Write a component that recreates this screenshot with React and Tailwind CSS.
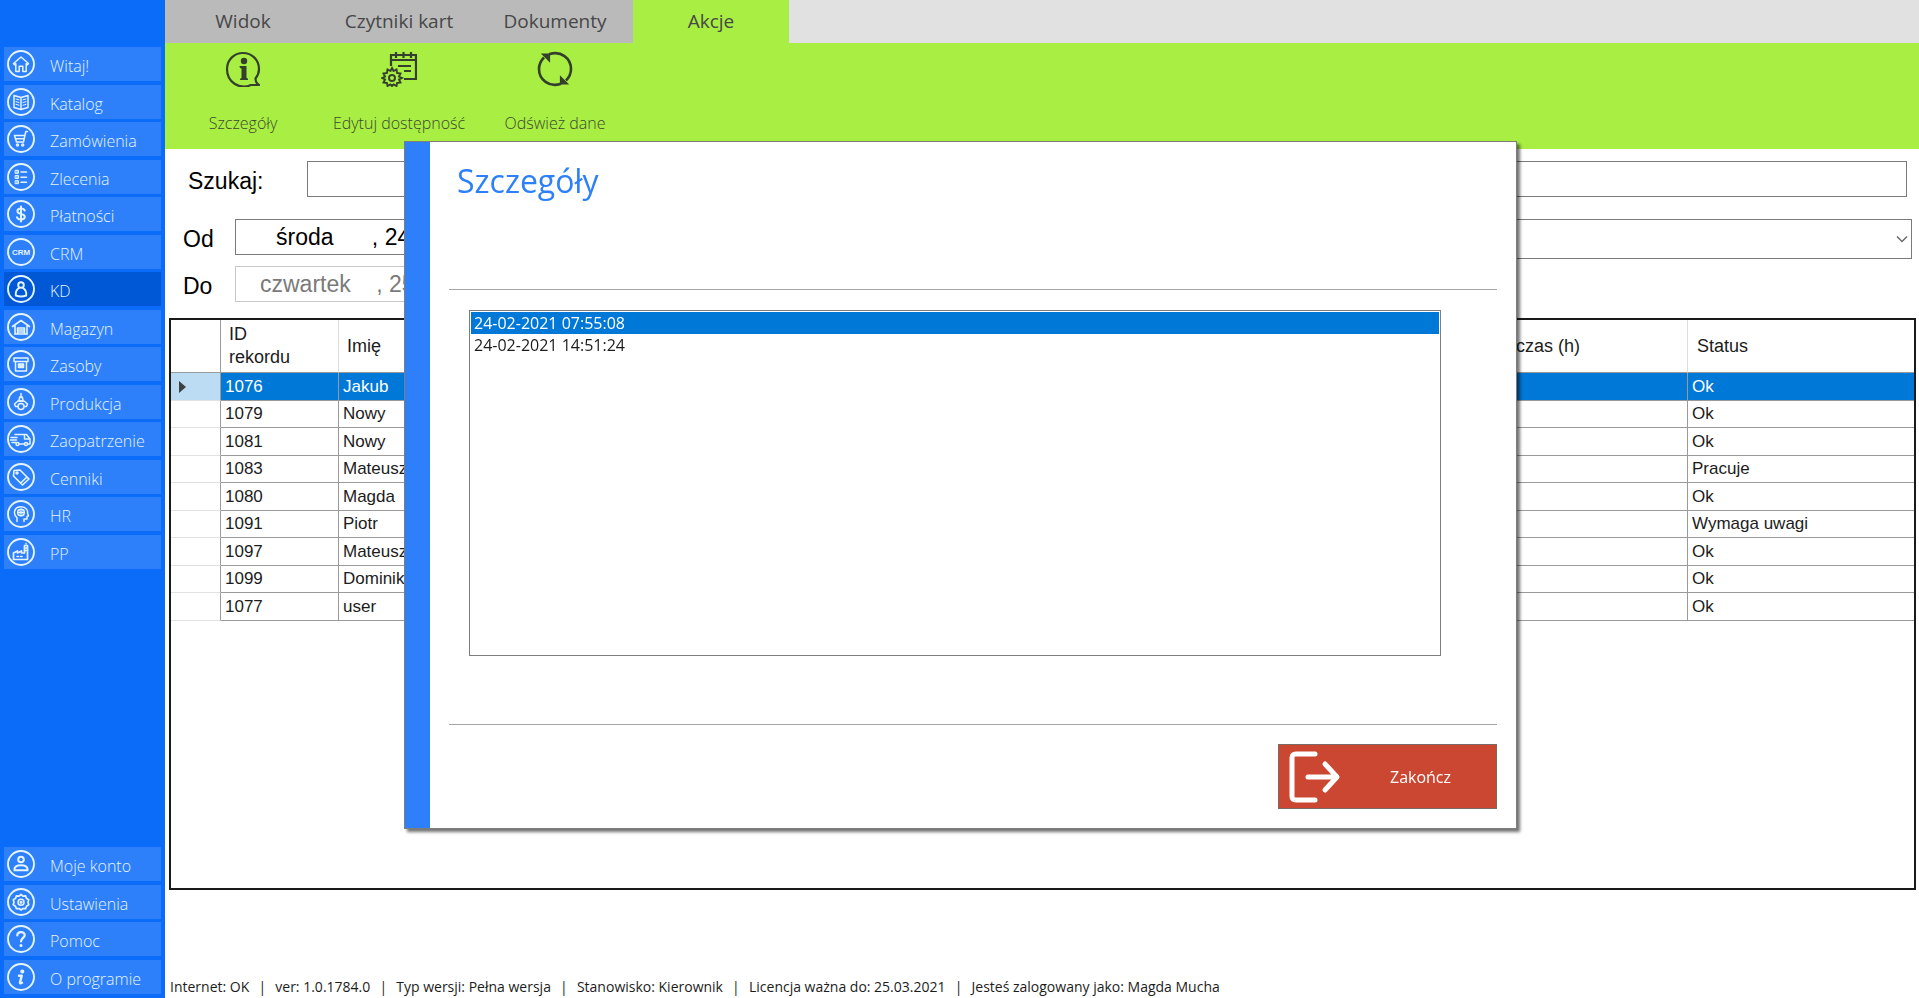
// src/App.jsx
import React from 'react';

const CircleIcon = ({ children }) => (
  <svg
    className="w-7 h-7 shrink-0"
    viewBox="0 0 28 28"
    fill="none"
    stroke="currentColor"
    strokeWidth="1.5"
    strokeLinecap="round"
    strokeLinejoin="round"
    aria-hidden="true"
  >
    <circle cx="14" cy="14" r="13" strokeWidth="1.9" />
    {children}
  </svg>
);

const icons = {
  home: <path d="M6.5 13.5 14 7l7.5 6.5-1 1.2-1.3-1v7.8h-3.4v-5.3h-3.6v5.3H8.8v-7.8l-1.3 1z" />,
  book: (
    <>
      <path d="M14 9.5 7 7.5v12l7 2 7-2v-12zM14 9.500v12" />
      <path d="m9 11 3 .8M9 13.7l3 .8M9 16.4l3 .8M19 11l-3 .8M19 13.7l-3 .8M19 16.4l-3 .8" strokeWidth="1" />
    </>
  ),
  cart: (
    <>
      <path d="M20.5 6.5h-1.7L16.500 17H9.500l-2-6.500h10M9 13.700h8" />
      <circle cx="10.500" cy="20" r="1" />
      <circle cx="15.700" cy="20" r="1" />
    </>
  ),
  list: (
    <>
      <path d="M8.5 7.300h3v3h-3zM8.500 12.500h3v3h-3zM8.500 17.700h3v3h-3z" fill="currentColor" fillOpacity=".6" strokeWidth="1" />
      <path d="M14 9h5.500M14 14.200h5.500M14 19.300h5.500" />
    </>
  ),
  dollar: <path d="M17.7 10.500c-.6-1.400-2-1.900-3.700-1.900-2 0-3.600.9-3.600 2.600 0 3.700 7.400 1.900 7.400 5.600 0 1.800-1.700 2.700-3.800 2.700s-3.500-.7-4-2.300M14 6.500v15" strokeWidth="2" />,
  crm: (
    <text x="14" y="17" textAnchor="middle" fontSize="8" fontWeight="700" fontFamily="Liberation Sans, sans-serif" fill="currentColor" stroke="none">
      CRM
    </text>
  ),
  person: (
    <>
      <circle cx="14" cy="10" r="2.800" strokeWidth="1.900" />
      <path d="M12 13c-3 2-3.600 4.500-3.200 7.500 3 1.200 7.400 1.200 10.400 0 .4-3-.2-5.500-3.200-7.500" strokeWidth="1.900" />
    </>
  ),
  warehouse: (
    <>
      <path d="M5.500 13.500 14 7.500l8.500 6M8 13v8M20 13v8" strokeWidth="1.600" />
      <path d="M10.500 21v-6h7v6M10.500 17h7M10.500 19h7M8 21h12" />
    </>
  ),
  box: <path d="M7 8h14v3.500H7zM8.500 11.500V21h11v-9.500M11.500 14h5v3.500h-5zM13 14v2h2v-2" />,
  production: (
    <>
      <path d="M14 5.500v4M12.700 9h2.600l.8 4h-4.200z" />
      <path d="M11 13h6l3.500 3-1 2.500h-2M11 13l-3.500 3 1 2.500h2" />
      <circle cx="14" cy="18.500" r="3" />
    </>
  ),
  truck: (
    <>
      <path d="M8 9.500h11.500L23 14v5h-2M12.500 19H17M17.500 9.500V14H23M4 12.500h6M3.500 15h6M5 17.500h4" />
      <circle cx="10.500" cy="19" r="1.500" />
      <circle cx="19" cy="19" r="1.500" />
    </>
  ),
  tag: (
    <>
      <path d="M7 7.500 13 7l9 9-6.500 6-9-9zM20 14l-6.300 6" strokeWidth="1.600" />
      <circle cx="10" cy="10" r="1" />
    </>
  ),
  head: (
    <>
      <path d="M10 21.500v-3.700c-4-3.500-3.500-11 4-11 5.500 0 7 4 6.500 6.500l1 2.500-1.500.7V19h-3v2.500" />
      <circle cx="14" cy="12.500" r="3.300" />
      <path d="M14 9v7M10.500 12.500h7M11.500 10l5 5M16.500 10l-5 5" strokeWidth="1" />
    </>
  ),
  factory: (
    <>
      <path d="M6.500 21.500V15l4-2v2l4-2v2h3V7.500h3v14z" strokeWidth="1.700" />
      <path d="M10 18.500h1.500M13.500 18.500H15M19 6v-.5M17.500 10h3M17.500 12.500h3" />
    </>
  ),
  user: (
    <>
      <circle cx="14" cy="9.500" r="2.800" strokeWidth="2" />
      <path d="M7.500 20.300c-.5-4 2.500-5 6.500-5s7 1 6.500 5z" strokeWidth="2" />
    </>
  ),
  gear: (
    <>
      <path d="m14 6.500 2 1.600 2.600-.2.900 2.500 2.200 1.400-.7 2.500.7 2.500-2.200 1.400-.9 2.500-2.600-.2-2 1.500-2-1.500-2.600.2-.9-2.500-2.200-1.400.7-2.500-.7-2.500 2.200-1.400.9-2.500 2.600.2z" strokeWidth="1.700" />
      <circle cx="14" cy="14.200" r="3" />
      <circle cx="14" cy="14.200" r=".8" />
    </>
  ),
  help: (
    <>
      <path d="M10.300 10.500c0-4.500 7.600-4.500 7.400-.3-.1 2.600-3.700 3-3.700 6.300" strokeWidth="2.200" />
      <circle cx="14" cy="20.500" r=".8" fill="currentColor" />
    </>
  ),
  info: (
    <>
      <circle cx="15.300" cy="8.500" r="1.300" fill="currentColor" />
      <path d="M12 12.700h2.700L13 19.500c-.2 1 .8 1 2 .2" strokeWidth="2.400" />
    </>
  ),
};

const mainMenu = [
  { label: 'Witaj!', icon: 'home' },
  { label: 'Katalog', icon: 'book' },
  { label: 'Zamówienia', icon: 'cart' },
  { label: 'Zlecenia', icon: 'list' },
  { label: 'Płatności', icon: 'dollar' },
  { label: 'CRM', icon: 'crm' },
  { label: 'KD', icon: 'person', active: true },
  { label: 'Magazyn', icon: 'warehouse' },
  { label: 'Zasoby', icon: 'box' },
  { label: 'Produkcja', icon: 'production' },
  { label: 'Zaopatrzenie', icon: 'truck' },
  { label: 'Cenniki', icon: 'tag' },
  { label: 'HR', icon: 'head' },
  { label: 'PP', icon: 'factory' },
];

const bottomMenu = [
  { label: 'Moje konto', icon: 'user' },
  { label: 'Ustawienia', icon: 'gear' },
  { label: 'Pomoc', icon: 'help' },
  { label: 'O programie', icon: 'info' },
];

const tabs = ['Widok', 'Czytniki kart', 'Dokumenty', 'Akcje'];

const rows = [
  { id: 1076, name: 'Jakub', status: 'Ok', selected: true },
  { id: 1079, name: 'Nowy', status: 'Ok' },
  { id: 1081, name: 'Nowy', status: 'Ok' },
  { id: 1083, name: 'Mateusz', status: 'Pracuje' },
  { id: 1080, name: 'Magda', status: 'Ok' },
  { id: 1091, name: 'Piotr', status: 'Wymaga uwagi' },
  { id: 1097, name: 'Mateusz', status: 'Ok' },
  { id: 1099, name: 'Dominik', status: 'Ok' },
  { id: 1077, name: 'user', status: 'Ok' },
];

const statusItems = [
  'Internet: OK',
  'ver: 1.0.1784.0',
  'Typ wersji: Pełna wersja',
  'Stanowisko: Kierownik',
  'Licencja ważna do: 25.03.2021',
  'Jesteś zalogowany jako: Magda Mucha',
];

function MenuButton({ item }) {
  return (
    <button
      type="button"
      className={`flex items-center w-full h-[34px] gap-[15px] pl-[3px] text-base font-light text-[#e4f4ff] ${
        item.active ? 'bg-[#0058d6]' : 'bg-[#2e80fa]'
      }`}
    >
      <CircleIcon>{icons[item.icon]}</CircleIcon>
      <span className="pt-1 whitespace-nowrap">{item.label}</span>
    </button>
  );
}

function Sidebar() {
  return (
    <aside className="flex flex-col justify-between w-[165px] shrink-0 pl-1 pr-1 pt-[47px] pb-1 bg-[#0a6cf8]">
      <nav className="flex flex-col justify-between h-[522px]">
        {mainMenu.map((item) => (
          <MenuButton key={item.label} item={item} />
        ))}
      </nav>
      <nav className="flex flex-col justify-between h-[147px]">
        {bottomMenu.map((item) => (
          <MenuButton key={item.label} item={item} />
        ))}
      </nav>
    </aside>
  );
}

function RibbonButton({ label, children }) {
  return (
    <button type="button" className="flex flex-col items-center w-[156px] pt-2 text-[#3c4a2c]">
      <svg className="w-9 h-9" viewBox="0 0 36 36" fill="none" stroke="#34402c" strokeWidth="2.2" aria-hidden="true">
        {children}
      </svg>
      <span className="mt-6 text-base font-light leading-6 whitespace-nowrap">{label}</span>
    </button>
  );
}

function Ribbon() {
  return (
    <header>
      <div className="flex h-[43px] bg-[#e1e1e1]">
        {tabs.map((tab) => (
          <button
            key={tab}
            type="button"
            className={`w-[156px] text-[19px] text-[#474747] ${tab === 'Akcje' ? 'bg-[#a9ee43]' : 'bg-[#bababa]'}`}
          >
            {tab}
          </button>
        ))}
      </div>
      <div className="flex items-start h-[106px] bg-[#a9ee43]">
        <RibbonButton label="Szczegóły">
          <path d="M34 34h-8c-12 5-24-3-24-16C2 9 9 2 18 2s16 7 16 16c0 4-1.500 7-3.500 9.500 0 3 1 5 3.500 6.500z" strokeLinejoin="round" />
          <circle cx="19" cy="10" r="3.200" fill="#34402c" stroke="none" />
          <path d="M14.500 15h7v12c1 0 1.500.5 1.500 2h-8c0-1.200.5-2 1.500-2v-9.500c-1.500 0-2-1-2-2.500z" fill="#34402c" stroke="none" />
        </RibbonButton>
        <RibbonButton label="Edytuj dostępność">
          <path d="M10 15V4h25v24H23M10 9h25M15 1v6M22.500 1v6M30 1v6M17 15h13M23 20h7" />
          <path d="m11 17 1.500 3 3-1.500.5 3.500 3.500.5-1.500 3 3 1.500-3 1.500 1.500 3-3.500.5-.5 3-3-1.500-1.500 1.500-1.500-1.500-3 1.500-.5-3-3.500-.5 1.500-3-3-1.500 3-1.500-1.500-3 3.500-.5.500-3.500 3 1.500z" strokeWidth="1.900" />
          <circle cx="11" cy="27" r="3" strokeWidth="1.900" />
        </RibbonButton>
        <RibbonButton label="Odśwież dane">
          <path d="M12 3.300C24-1 34 7.500 34 18c0 5-2 8.500-5 11.500M24 32.700C12 37 2 28.500 2 18 2 13 4 9.500 7 6.500" strokeWidth="2.600" />
          <path d="M6.500 3.500h5.500v5.500zM29.500 32.500H24V27z" fill="#34402c" />
        </RibbonButton>
      </div>
    </header>
  );
}

function Filters() {
  return (
    <form className="pt-3 text-[23px] text-black font-['Liberation_Sans',sans-serif]">
      <div className="flex items-start pl-[23px] pr-3">
        <label htmlFor="search" className="w-[119px] pt-1 leading-8">Szukaj:</label>
        <input id="search" type="text" className="flex-1 px-2 border h-9 border-[#7a7a7a]" />
      </div>
      <div className="flex items-start pl-[18px] pr-[7px] mt-[22px]">
        <label htmlFor="from" className="w-[52px] pt-1 leading-8">Od</label>
        <input
          id="from"
          type="text"
          defaultValue="środa      , 24"
          className="w-[280px] pl-10 border h-9 border-[#7a7a7a]"
        />
        <select aria-label="Filtr" className="w-1/2 h-10 px-2 ml-auto appearance-none border border-[#7a7a7a]">
          <option></option>
        </select>
        <svg className="self-center w-3 h-3 mr-1 -ml-4 pointer-events-none" viewBox="0 0 12 12" fill="none" stroke="#6b6b6b" strokeWidth="1.5" aria-hidden="true">
          <path d="m1 3.500 5 5 5-5" />
        </svg>
      </div>
      <div className="flex items-start pl-[18px] mt-[7px]">
        <label htmlFor="to" className="w-[52px] pt-1 leading-8">Do</label>
        <input
          id="to"
          type="text"
          disabled
          defaultValue="czwartek    , 25"
          className="w-[280px] pl-6 border h-9 border-[#c8c8c8] text-[#7a7a7a]"
        />
      </div>
    </form>
  );
}

function Records() {
  return (
    <div className="flex-1 mt-4 ml-1 mr-[3px] border-2 border-[#1a1a1a] font-['Liberation_Sans',sans-serif]">
      <table className="w-full table-fixed border-separate border-spacing-0 text-[17px] text-[#1c1c1c]">
        <colgroup>
          <col className="w-[50px]" />
          <col className="w-[118px]" />
          <col />
          <col className="w-[180px]" />
          <col className="w-[226px]" />
        </colgroup>
        <thead>
          <tr className="h-[53px] text-lg leading-[23px] text-left">
            <th className="border-b border-r border-[#9a9a9a]" aria-label="Wiersz"></th>
            <th className="pl-2 pr-10 font-normal border-b border-r border-b-[#9a9a9a] border-r-[#dcdcdc]">ID rekordu</th>
            <th className="pl-2 font-normal border-b border-b-[#9a9a9a]">Imię</th>
            <th className="pl-2 font-normal border-b border-r border-b-[#9a9a9a] border-r-[#dcdcdc]">czas (h)</th>
            <th className="pl-[9px] font-normal border-b border-b-[#9a9a9a]">Status</th>
          </tr>
        </thead>
        <tbody>
          {rows.map((row) => (
            <tr
              key={row.id}
              className={`odd:h-7 even:h-[27px] leading-5 ${row.selected ? 'bg-[#0078d7] text-white' : ''}`}
            >
              <td className={`border-b border-r border-b-[#e2e2e2] border-r-[#9a9a9a] ${row.selected ? 'bg-[#bcdcf4]' : ''}`}>
                {row.selected && (
                  <svg className="w-2 h-3 ml-2" viewBox="0 0 8 12" fill="#404040" aria-hidden="true">
                    <path d="M0 0v12l7-6z" />
                  </svg>
                )}
              </td>
              <td className="pl-1 border-b border-r border-[#9a9a9a]">{row.id}</td>
              <td className="pl-1 border-b border-[#9a9a9a]">{row.name}</td>
              <td className="border-b border-r border-[#9a9a9a]"></td>
              <td className="pl-1 border-b border-[#9a9a9a]">{row.status}</td>
            </tr>
          ))}
        </tbody>
      </table>
    </div>
  );
}

function StatusBar() {
  return (
    <footer className="flex items-end h-[108px] pl-[5px] text-sm leading-[22px] text-[#1c1c1c] whitespace-nowrap">
      {statusItems.map((item, i) => (
        <React.Fragment key={item}>
          {i > 0 && <span className="w-[26px] text-center">|</span>}
          <span>{item}</span>
        </React.Fragment>
      ))}
    </footer>
  );
}

function DetailsDialog() {
  return (
    <div className="fixed inset-0 flex items-start justify-center pt-[141px] pl-[2px]">
      <section
        role="dialog"
        aria-labelledby="details-title"
        className="flex w-[1113px] bg-white border border-[#7d7d7d] shadow-[3px_3px_3px_rgba(0,0,0,0.55)]"
      >
        <div className="w-[25px] shrink-0 bg-[#2e80fa]"></div>
        <div className="flex-1 pt-4 pb-[19px] pl-[19px] pr-[19px]">
          <h1 id="details-title" className="pl-2 text-[32px] leading-[46px] text-[#2e80fa]">Szczegóły</h1>
          <hr className="mt-[85px] border-[#a5a5a5]" />
          <ul
            role="listbox"
            aria-label="Odczyty"
            className="h-[346px] mt-5 ml-5 mr-14 p-px border border-[#7d7d7d] text-base leading-[22px] text-[#1c1c1c]"
          >
            <li role="option" aria-selected="true" className="pl-[3px] bg-[#0078d7] text-white">24-02-2021 07:55:08</li>
            <li role="option" aria-selected="false" className="pl-[3px]">24-02-2021 14:51:24</li>
          </ul>
          <hr className="mt-[68px] border-[#a5a5a5]" />
          <button
            type="button"
            className="flex items-center w-[219px] h-[65px] mt-[19px] ml-auto pl-2 border border-[#7a6a66] bg-[#cc4731] text-white text-base"
          >
            <svg className="w-[54px] h-[54px]" viewBox="0 0 54 54" fill="none" stroke="currentColor" strokeWidth="5" strokeLinecap="round" strokeLinejoin="round" aria-hidden="true">
              <path d="M28 4H9c-3 0-4 1-4 4v38c0 3 1 4 4 4h19M21 27h28M38 14l12 13-12 13" />
            </svg>
            <span className="flex-1 pl-1 text-center">Zakończ</span>
          </button>
        </div>
      </section>
    </div>
  );
}

export default function App() {
  return (
    <div className="flex min-h-screen bg-white font-['Open_Sans','Noto_Sans',sans-serif]">
      <Sidebar />
      <main className="flex flex-col flex-1 min-w-0">
        <Ribbon />
        <Filters />
        <Records />
        <StatusBar />
      </main>
      <DetailsDialog />
    </div>
  );
}
